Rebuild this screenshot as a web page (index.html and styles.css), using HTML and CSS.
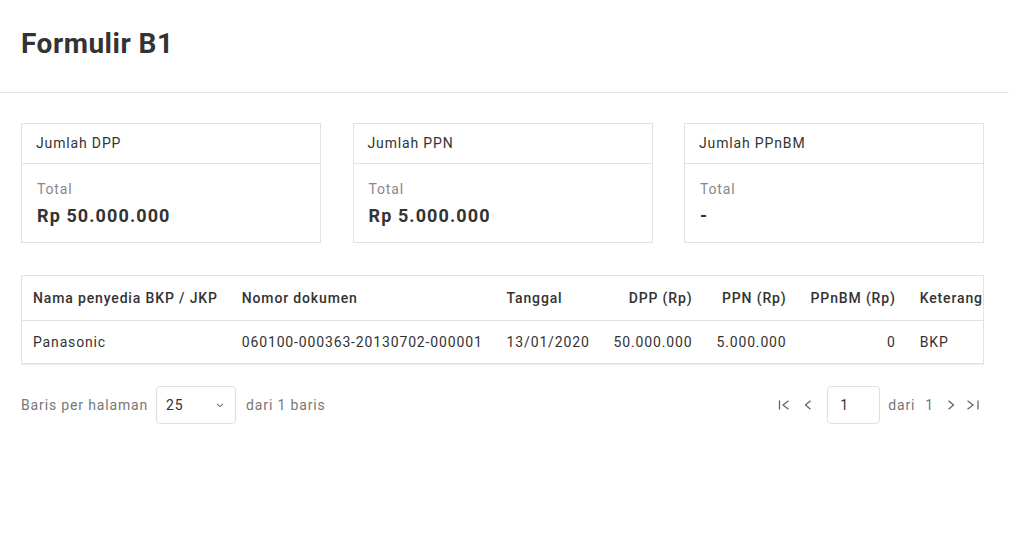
FILE: index.html
```html
<!DOCTYPE html>
<html lang="id">
<head>
<meta charset="utf-8">
<title>Formulir B1</title>
<link rel="stylesheet" href="styles.css">
</head>
<body>
<header class="page-header">
  <h1 class="title">Formulir B1</h1>
</header>
<main class="content">
  <section class="cards">
    <div class="card">
      <div class="card-head">Jumlah DPP</div>
      <div class="card-body">
        <div class="label">Total</div>
        <div class="value">Rp 50.000.000</div>
      </div>
    </div>
    <div class="card">
      <div class="card-head">Jumlah PPN</div>
      <div class="card-body">
        <div class="label">Total</div>
        <div class="value">Rp 5.000.000</div>
      </div>
    </div>
    <div class="card">
      <div class="card-head">Jumlah PPnBM</div>
      <div class="card-body">
        <div class="label">Total</div>
        <div class="value">-</div>
      </div>
    </div>
  </section>

  <div class="table-wrap">
    <table class="data">
      <thead>
        <tr>
          <th>Nama penyedia BKP / JKP</th>
          <th>Nomor dokumen</th>
          <th>Tanggal</th>
          <th class="num">DPP (Rp)</th>
          <th class="num">PPN (Rp)</th>
          <th class="num">PPnBM (Rp)</th>
          <th>Keterangan</th>
        </tr>
      </thead>
      <tbody>
        <tr>
          <td>Panasonic</td>
          <td>060100-000363-20130702-000001</td>
          <td>13/01/2020</td>
          <td class="num">50.000.000</td>
          <td class="num">5.000.000</td>
          <td class="num">0</td>
          <td>BKP</td>
        </tr>
      </tbody>
    </table>
  </div>

  <div class="pager">
    <div class="pager-left">
      <span class="muted">Baris per halaman</span>
      <div class="select">
        <span>25</span>
        <svg class="chev-down" width="10" height="10" viewBox="0 0 10 10"><path d="M2 4 L5 6.6 L8 4" fill="none" stroke="#777" stroke-width="1.1"/></svg>
      </div>
      <span class="muted">dari 1 baris</span>
    </div>
    <div class="pager-right">
      <svg class="nav nav-first" width="12" height="12" viewBox="0 0 12 12"><path d="M1.5 1.5 V10.5" stroke="#666" stroke-width="1.3" fill="none"/><path d="M10.5 1.8 L5 6 L10.5 10.2" stroke="#666" stroke-width="1.3" fill="none"/></svg>
      <svg class="nav nav-prev" width="12" height="12" viewBox="0 0 12 12"><path d="M8.5 1.8 L3.5 6 L8.5 10.2" stroke="#666" stroke-width="1.3" fill="none"/></svg>
      <div class="page-input">1</div>
      <span class="muted of">dari</span>
      <span class="muted total">1</span>
      <svg class="nav nav-next" width="12" height="12" viewBox="0 0 12 12"><path d="M3.5 1.8 L8.5 6 L3.5 10.2" stroke="#666" stroke-width="1.3" fill="none"/></svg>
      <svg class="nav nav-last" width="14" height="12" viewBox="0 0 14 12"><path d="M1.5 1.8 L7 6 L1.5 10.2" stroke="#666" stroke-width="1.3" fill="none"/><path d="M12 1.5 V10.5" stroke="#666" stroke-width="1.3" fill="none"/></svg>
    </div>
  </div>
</main>
</body>
</html>
```

FILE: styles.css
```css
* { box-sizing: border-box; }
html, body { margin: 0; padding: 0; background: #fff; }
body {
  font-family: Roboto, "Liberation Sans", Arial, sans-serif;
  color: #333;
  font-size: 14px;
  letter-spacing: 0.85px;
}
.page-header {
  height: 93px;
  padding: 26px 21px 0;
  border-bottom: 1px solid #e6e6e6;
}
.title {
  margin: 0;
  font-size: 28px;
  line-height: 36px;
  font-weight: 700;
  color: #333;
  letter-spacing: 0.5px;
}
.content {
  padding: 30px 25px 0 21px;
}
.cards {
  display: grid;
  grid-template-columns: repeat(3, 300px);
  justify-content: space-between;
}
.card {
  border: 1px solid #e2e2e2;
  height: 120px;
}
.card-head {
  height: 40px;
  line-height: 39px;
  padding: 0 14px;
  border-bottom: 1px solid #e2e2e2;
  color: #333;
}
.card-body {
  padding: 15px 14px 0 15px;
}
.label {
  line-height: 20px;
  color: #888;
}
.value {
  margin-top: 5px;
  line-height: 24px;
  font-size: 18px;
  font-weight: 700;
  color: #333;
  letter-spacing: 1.1px;
}
.table-wrap {
  margin-top: 32px;
  border: 1px solid #e2e2e2;
  overflow: hidden;
  box-shadow: 0 1px 0 #efefef;
}
.data {
  border-collapse: collapse;
  white-space: nowrap;
  min-width: 100%;
}
.data th, .data td {
  padding: 0 12px;
  text-align: left;
  color: #333;
}
.data th:first-child, .data td:first-child { padding-left: 11px; }
.data th {
  font-weight: 500;
  border-bottom: 1px solid #e2e2e2;
  height: 44px;
}
.data td { height: 43px; }
.data .num { text-align: right; }
.pager {
  margin-top: 22px;
  display: flex;
  justify-content: space-between;
  align-items: center;
}
.pager-left, .pager-right {
  display: flex;
  align-items: center;
}
.muted { color: #777; }
.select {
  margin: 0 10px 0 8px;
  width: 80px;
  height: 38px;
  border: 1px solid #e0e0e0;
  border-radius: 4px;
  display: flex;
  align-items: center;
  justify-content: space-between;
  padding: 0 10px 0 9px;
  color: #333;
}
.pager-right { margin-right: 4px; }
.nav { display: block; }
.nav-prev { margin-left: 12px; }
.page-input {
  margin: 0 8px 0 13px;
  width: 53px;
  height: 38px;
  border: 1px solid #e0e0e0;
  border-radius: 4px;
  line-height: 36px;
  padding-left: 12px;
  color: #333;
}
.total { margin-left: 10px; }
.nav-next { margin-left: 11px; }
.nav-last { margin-left: 9px; }
```
